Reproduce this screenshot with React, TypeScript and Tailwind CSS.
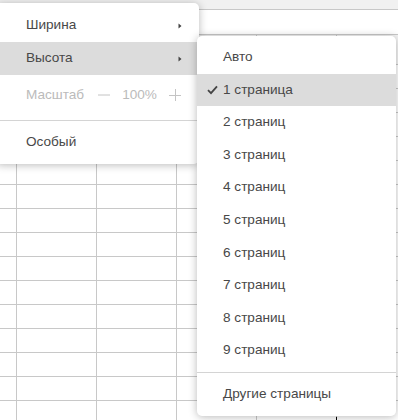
const font = { fontFamily: '"Liberation Sans", Arial, sans-serif' };

const Chevron = () => (
    <svg width="4" height="6" viewBox="0 0 4 6" className="shrink-0">
        <path d="M0.5 0.5 L3.5 3 L0.5 5.5 Z" fill="#444" />
    </svg>
);

const Check = () => (
    <svg width="11" height="10" viewBox="0 0 11 10" className="absolute left-[10px]">
        <path d="M1 5.2 L4 8.2 L10 1.4" fill="none" stroke="#444" strokeWidth="1.8" />
    </svg>
);

const Grid = () => {
    const rows = Array.from({ length: 15 });
    const cols = [17, 80, 80, 80, 80, 80];

    return (
        <div className="flex flex-col">
            <div className="flex h-[30px] border-b border-[#c8c8c8] bg-[#f4f4f4]">
                {cols.map((w, i) => (
                    <div key={i} className="shrink-0 border-r border-[#c8c8c8]" style={{ width: w }} />
                ))}
            </div>
            {rows.map((_, r) => (
                <div key={r} className="flex h-[24px] border-b border-[#c8c8c8]">
                    {cols.map((w, i) => (
                        <div key={i} className="shrink-0 border-r border-[#c8c8c8]" style={{ width: w }} />
                    ))}
                </div>
            ))}
        </div>
    );
};

const Item = ({ label, active, arrow }: { label: string, active?: boolean, arrow?: boolean }) => (
    <div className={`flex items-center h-[33px] pl-[30px] pr-[17px] ${active ? 'bg-[#dcdcdc]' : ''}`}>
        <span className="mr-auto">{label}</span>
        {arrow && <Chevron />}
    </div>
);

const pages = ['2', '3', '4', '5', '6', '7', '8', '9'];

export default function App() {
    return (
        <div className="relative w-[398px] h-[420px] overflow-hidden bg-white text-[13.6px] text-[#484848]" style={font}>
            {/* sheet behind the menus */}
            <div className="h-[10px] bg-[#f1f1f1] border-b border-[#c8c8c8]" />
            <div className="h-[25px] bg-white border-b border-[#c8c8c8]" />
            <Grid />
            <div className="absolute left-[336px] top-[417px] w-px h-[3px] bg-black" />

            {/* left menu */}
            <div className="absolute left-[-4px] top-[3px] w-[203px] h-[161px] bg-white rounded-[5px] shadow-[0_1px_8px_rgba(0,0,0,0.28)] pt-[6px]">
                <Item label="Ширина" arrow />
                <Item label="Высота" arrow active />
                <div className="flex items-center h-[40px] pl-[30px] text-[#bbb]">
                    <span>Масштаб</span>
                    <svg width="12" height="2" viewBox="0 0 12 2" className="ml-[14px]">
                        <path d="M0 1 H12" stroke="#c4c4c4" strokeWidth="1" />
                    </svg>
                    <span className="ml-[12px]">100%</span>
                    <svg width="12" height="12" viewBox="0 0 12 12" className="ml-[12px]">
                        <path d="M0 6.5 H12 M6.5 0 V12" stroke="#c4c4c4" strokeWidth="1" />
                    </svg>
                </div>
                <div className="my-[5px] h-px bg-[#d4d4d4]" />
                <Item label="Особый" />
            </div>

            {/* right submenu */}
            <div className="absolute left-[197px] top-[36px] w-[199px] h-[380px] bg-white rounded-[5px] shadow-[0_1px_8px_rgba(0,0,0,0.28)] pt-[5px]">
                <div className="flex items-center h-[32.6px] pl-[26px]">Авто</div>
                <div className="relative flex items-center h-[32.6px] pl-[26px] bg-[#dcdcdc]">
                    <Check />
                    1 страница
                </div>
                {pages.map((p) => (
                    <div key={p} className="flex items-center h-[32.6px] pl-[26px]">{p} страниц</div>
                ))}
                <div className="my-[5px] h-px bg-[#d4d4d4]" />
                <div className="flex items-center h-[33px] pl-[26px]">Другие страницы</div>
            </div>
        </div>
    );
}
